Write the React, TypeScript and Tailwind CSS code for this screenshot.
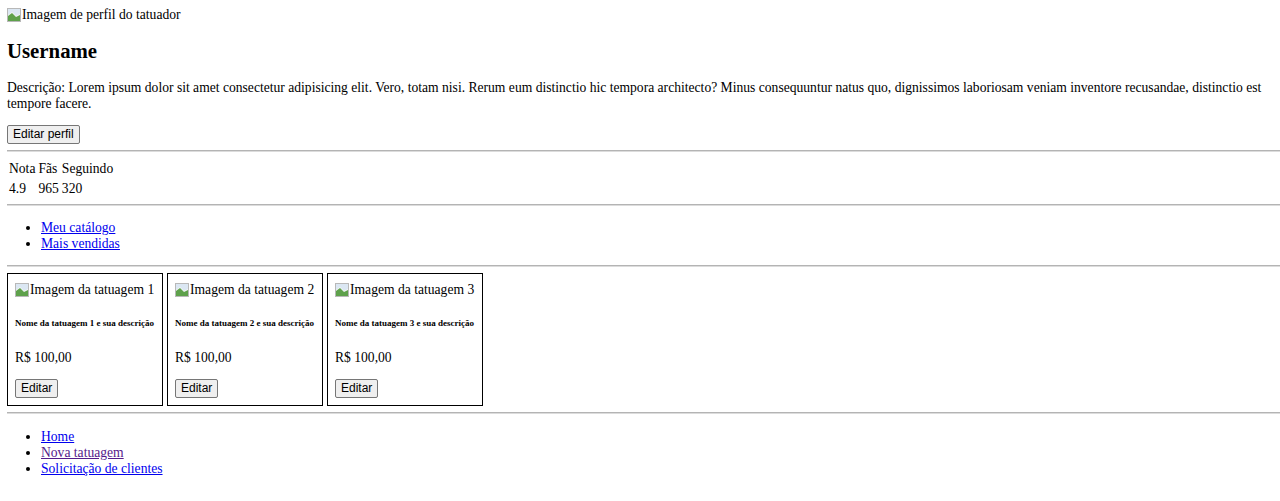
function BrokenImg({ alt }: { alt: string }) {
  return (
    <span className="inline-flex items-end">
      <svg width="14" height="14" viewBox="0 0 14 14" className="mb-[1px] mr-[1px]">
        <rect x="0.5" y="0.5" width="13" height="13" fill="#f4f4f4" stroke="#b8b8b8" />
        <path d="M1 13 L1 8 L5 5 L9 9 L13 7 L13 13 Z" fill="#5ea14b" />
        <path d="M1 1 H13 V6 L9 8 L5 4 L1 7 Z" fill="#dbe7f3" />
      </svg>
      <span>{alt}</span>
    </span>
  );
}

function Button({ children }: { children: string }) {
  return (
    <button className="rounded-[2px] border border-[#767676] bg-[#efefef] px-[5px] py-0 font-['Liberation_Sans',Arial,sans-serif] text-[12px] leading-[17px] text-black">
      {children}
    </button>
  );
}

function Rule() {
  return <div className="h-[2px] border-t border-b border-t-[#b4b4b4] border-b-[#dcdcdc]" />;
}

const tattoos = [1, 2, 3];

export default function App() {
  return (
    <div className="min-h-[501px] bg-white pl-[7px] pt-[7px] font-['Liberation_Serif','Times_New_Roman',serif] text-[13.6px] leading-[16px] text-black">
      <div className="h-[16px]">
        <BrokenImg alt="Imagem de perfil do tatuador" />
      </div>
      <h2 className="mt-[16px] mb-[17px] text-[20.8px] font-bold leading-[24px]">Username</h2>
      <p className="pr-[7px]">
        Descrição: Lorem ipsum dolor sit amet consectetur adipisicing elit. Vero, totam nisi. Rerum eum distinctio
        hic tempora architecto? Minus consequuntur natus quo, dignissimos laboriosam veniam inventore recusandae,
        distinctio est tempore facere.
      </p>
      <div className="mt-[13px] h-[19px]">
        <Button>Editar perfil</Button>
      </div>
      <div className="mt-[6px]">
        <Rule />
      </div>

      <table className="mt-[6px] border-separate border-spacing-[2px]">
        <tbody>
          <tr>
            <td className="py-px pl-0 pr-px">Nota</td>
            <td className="py-px pl-0 pr-px">Fãs</td>
            <td className="py-px pl-0 pr-px">Seguindo</td>
          </tr>
          <tr>
            <td className="py-px pl-0 pr-px">4.9</td>
            <td className="py-px pl-0 pr-px">965</td>
            <td className="py-px pl-0 pr-px">320</td>
          </tr>
        </tbody>
      </table>

      <div className="mt-[4px]">
        <Rule />
      </div>
      <ul className="mt-[14px] mb-[13px] list-disc pl-[34px]">
        <li>
          <a href="#" className="text-[#0000ee] underline">Meu catálogo</a>
        </li>
        <li>
          <a href="#" className="text-[#0000ee] underline">Mais vendidas</a>
        </li>
      </ul>
      <Rule />

      <div className="mt-[6px] flex gap-[4px]">
        {tattoos.map((n) => (
          <div key={n} className="w-[156px] border border-black px-[7px] pt-[8px] pb-[7px]">
            <div className="h-[16px] whitespace-nowrap">
              <BrokenImg alt={`Imagem da tatuagem ${n}`} />
            </div>
            <h5 className="mt-[19px] whitespace-nowrap text-[9px] font-bold leading-[12px]">
              Nome da tatuagem {n} e sua descrição
            </h5>
            <p className="mt-[21px]">R$ 100,00</p>
            <div className="mt-[13px] h-[19px]">
              <Button>Editar</Button>
            </div>
          </div>
        ))}
      </div>

      <div className="mt-[6px]">
        <Rule />
      </div>
      <ul className="mt-[15px] list-disc pl-[34px]">
        <li>
          <a href="#" className="text-[#0000ee] underline">Home</a>
        </li>
        <li>
          <a href="#" className="text-[#551a8b] underline">Nova tatuagem</a>
        </li>
        <li>
          <a href="#" className="text-[#0000ee] underline">Solicitação de clientes</a>
        </li>
      </ul>
    </div>
  );
}
